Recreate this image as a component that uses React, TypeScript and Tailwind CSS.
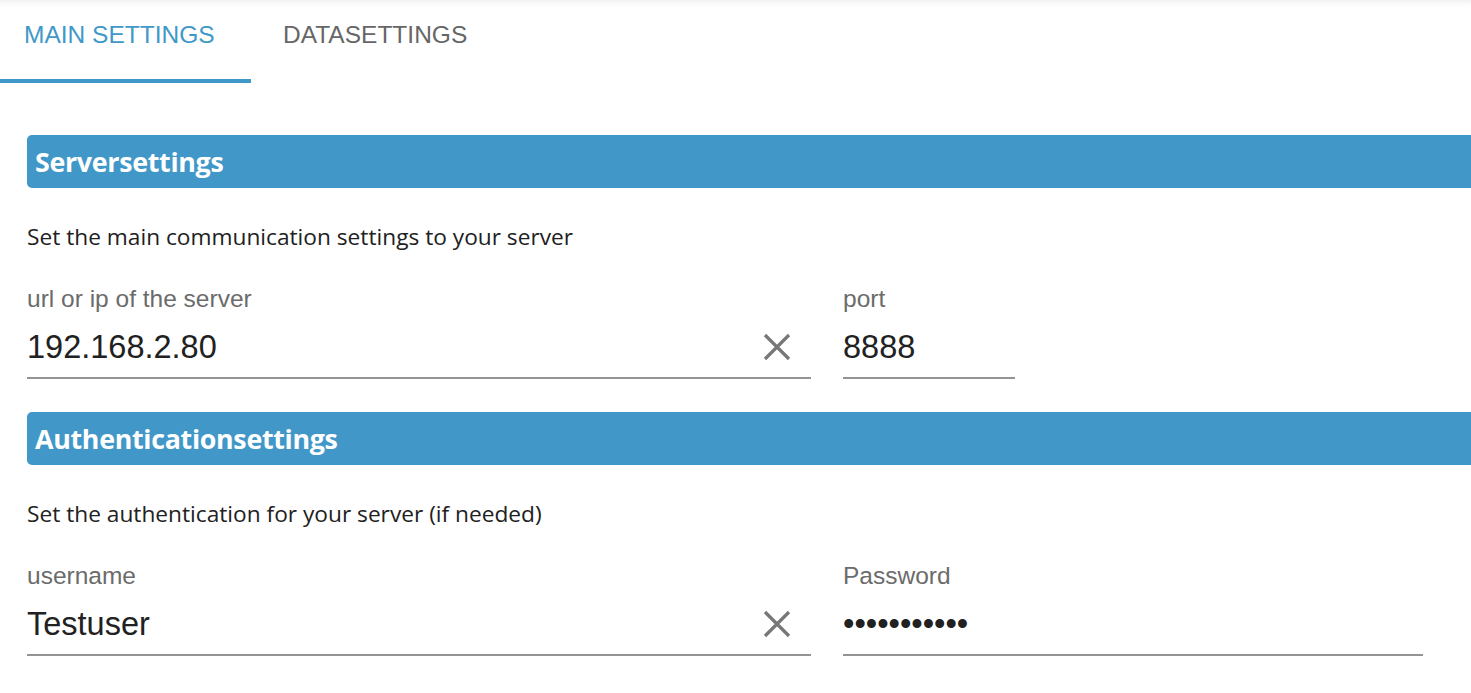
import { useState } from "react"

const blue = "bg-[#4198c8]"

function SectionHeader({ title }: { title: string }) {
  return (
    <div className={`${blue} h-[53px] rounded-l-[5px] flex items-center pl-[8px] pt-[2px]`}>
      <h2 className="text-white font-bold text-[26.8px] font-['Open_Sans',sans-serif] tracking-[-0.3px]">{title}</h2>
    </div>
  )
}

function ClearIcon() {
  return (
    <svg width="28" height="28" viewBox="0 0 28 28" className="shrink-0">
      <path d="M2 2 L26 26 M26 2 L2 26" stroke="#777777" strokeWidth="3.2" fill="none" />
    </svg>
  )
}

function Field({
  label,
  value,
  width,
  clearable = false,
  password = false,
}: {
  label: string
  value: string
  width: string
  clearable?: boolean
  password?: boolean
}) {
  return (
    <div className={`${width} flex flex-col`}>
      <label className="h-[24px] leading-[24px] text-[24.5px] text-[#6b6b6b]">{label}</label>
      <div className="h-[68px] pt-[6px] flex items-center justify-between border-b-2 border-[#949494]">
        <span className="text-[32.5px] text-[#212121]">
          {password ? "•".repeat(value.length) : value}
        </span>
        {clearable && (
          <span className="mr-[20px] flex items-center">
            <ClearIcon />
          </span>
        )}
      </div>
    </div>
  )
}

export default function App() {
  const [tab, setTab] = useState(0)

  return (
    <div className="w-[1471px] h-[693px] overflow-hidden bg-white font-['Liberation_Sans',Arial,sans-serif]">
      {/* Tabs */}
      <div className="flex h-[83px] shadow-[inset_0_7px_6px_-5px_rgba(0,0,0,0.07)]">
        <button
          onClick={() => setTab(0)}
          className={`w-[251px] text-left text-[24.5px] h-full flex flex-col ${tab === 0 ? "text-[#4198c8]" : "text-[#666666]"}`}
        >
          <span className="flex-1 flex items-center pl-[24px] pb-[9px]">MAIN SETTINGS</span>
          <span className={`h-[4px] w-full ${tab === 0 ? blue : "bg-transparent"}`} />
        </button>
        <button
          onClick={() => setTab(1)}
          className={`text-left text-[24.5px] h-full flex flex-col ${tab === 1 ? "text-[#4198c8]" : "text-[#666666]"}`}
        >
          <span className="flex-1 flex items-center px-[32px] pb-[9px]">DATASETTINGS</span>
          <span className={`h-[4px] w-full ${tab === 1 ? blue : "bg-transparent"}`} />
        </button>
      </div>

      {/* Content */}
      <div className="pl-[27px] pt-[52px]">
        <SectionHeader title="Serversettings" />
        <p className="mt-[35px] h-[28px] leading-[28px] text-[22.7px] text-[#212121] font-['Open_Sans',sans-serif]">
          Set the main communication settings to your server
        </p>
        <div className="mt-[36px] flex gap-[32px]">
          <Field label="url or ip of the server" value="192.168.2.80" width="w-[784px]" clearable />
          <Field label="port" value="8888" width="w-[172px]" />
        </div>

        <div className="mt-[33px]">
          <SectionHeader title="Authenticationsettings" />
        </div>
        <p className="mt-[35px] h-[28px] leading-[28px] text-[22.7px] text-[#212121] font-['Open_Sans',sans-serif]">
          Set the authentication for your server (if needed)
        </p>
        <div className="mt-[36px] flex gap-[32px]">
          <Field label="username" value="Testuser" width="w-[784px]" clearable />
          <Field label="Password" value="secretpass1" width="w-[580px]" password />
        </div>
      </div>
    </div>
  )
}
